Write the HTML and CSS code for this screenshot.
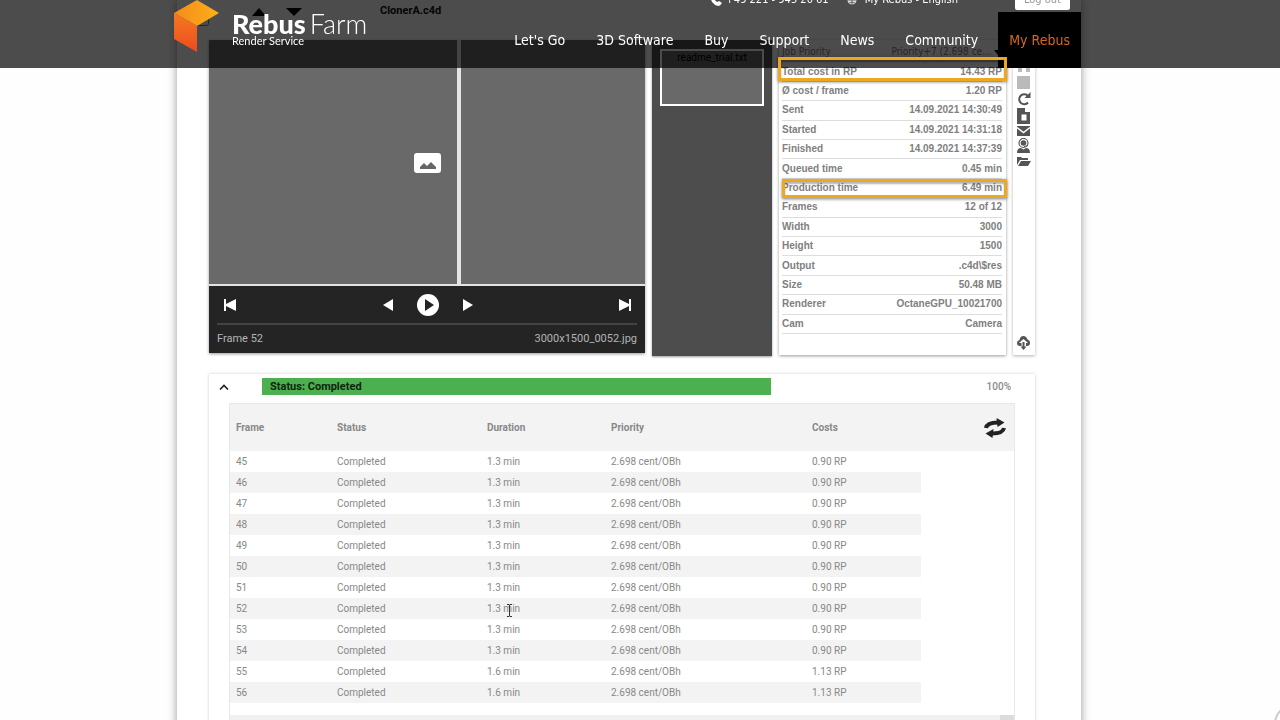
FILE: index.html
```html
<!DOCTYPE html>
<html lang="en">
<head>
<meta charset="utf-8">
<title>RebusFarm – My Rebus</title>
<link rel="stylesheet" href="styles.css">
</head>
<body>
<header class="site-header">
  <div class="header-inner">
    <a class="logo" href="#" aria-label="RebusFarm Render Service">
      <svg class="logo-mark" viewBox="0 0 46 53" width="46" height="53" aria-hidden="true">
        <defs>
          <linearGradient id="lt" x1="0" x2="1"><stop offset="0" stop-color="#f58a1c"/><stop offset="1" stop-color="#fcb017"/></linearGradient>
          <linearGradient id="lf" x1="0" x2="0" y1="0" y2="1"><stop offset="0" stop-color="#f47a20"/><stop offset="1" stop-color="#ee4a20"/></linearGradient>
        </defs>
        <path d="M0 13 23 0 45 13 23 26z" fill="url(#lt)"/>
        <path d="M0 13 23 26V52L0 39z" fill="url(#lf)"/>
      </svg>
      <span class="logo-text">
        <span class="logo-name"><b>Rebus</b><span class="logo-farm">Farm</span></span>
        <span class="logo-sub">Render Service</span>
      </span>
    </a>
    <div class="header-right">
      <div class="utility">
        <span class="util-item"><svg viewBox="0 0 12 12" width="12" height="12" aria-hidden="true"><path d="M1 2 3 0 5 3 4 4.500Q5 7 7.500 8L9 7l3 2-2 2.500Q6 13 2.500 8.500 0 5 1 2z" fill="#fff"/></svg>+49 221 - 945 20 61</span>
        <a class="util-item lang" href="#"><svg viewBox="0 0 12 12" width="10" height="10" aria-hidden="true"><circle cx="6" cy="6" r="5.500" fill="#ddd"/><path d="M0 6h12M6 0v12M2 2q4 3 8 0M2 10q4-3 8 0" stroke="#555" fill="none"/></svg>My Rebus - English</a>
        <button class="logout" type="button">Log out</button>
      </div>
      <nav class="nav">
        <a href="#">Let's Go</a><a href="#">3D Software</a><a href="#">Buy</a><a href="#">Support</a><a href="#">News</a><a href="#">Community</a><a class="active" href="#">My Rebus</a>
      </nav>
    </div>
  </div>
</header>

<main class="page">
  <div class="job-title">
    <input class="pick" type="checkbox" aria-label="Select job">
    <button class="icon-btn" type="button" aria-label="Previous job"><svg viewBox="0 0 14 8" width="14" height="8"><path d="M0 8 7 0l7 8z"/></svg></button>
    <button class="icon-btn" type="button" aria-label="Next job"><svg viewBox="0 0 16 8" width="16" height="8"><path d="M0 0h16L8 8z"/></svg></button>
    <h1>ClonerA.c4d</h1>
  </div>

  <div class="job">
    <section class="preview">
      <div class="stage">
        <div class="stage-left"></div><div class="stage-right"></div>
        <svg class="picture-icon" viewBox="0 0 27 20" width="27" height="20" aria-hidden="true"><rect width="27" height="20" rx="3" fill="#fff"/><path d="M6 16v-2l4-4 3 3 4-4 5 5v2z" fill="#666"/></svg>
      </div>
      <div class="player">
        <div class="controls">
          <button class="icon-btn" type="button" aria-label="First frame"><svg viewBox="0 0 12 12" width="12" height="12"><path d="M0 0h2v5L12 0v12L2 7v5H0z"/></svg></button>
          <div class="control-group">
            <button class="icon-btn" type="button" aria-label="Previous frame"><svg viewBox="0 0 10 12" width="10" height="12"><path d="M10 0v12L0 6z"/></svg></button>
            <button class="icon-btn" type="button" aria-label="Play"><svg viewBox="0 0 22 22" width="22" height="22"><circle cx="11" cy="11" r="11"/><path d="M8 5v12l9-6z" fill="#242424"/></svg></button>
            <button class="icon-btn" type="button" aria-label="Next frame"><svg viewBox="0 0 10 12" width="10" height="12"><path d="M0 0v12l10-6z"/></svg></button>
          </div>
          <button class="icon-btn" type="button" aria-label="Last frame"><svg viewBox="0 0 12 12" width="12" height="12"><path d="M12 0h-2v5L0 0v12l10-5v5h2z"/></svg></button>
        </div>
        <div class="caption"><span>Frame 52</span><span>3000x1500_0052.jpg</span></div>
      </div>
    </section>

    <aside class="thumbs"><div class="thumb">readme_trial.txt</div></aside>

    <section class="details">
      <dl>
        <div><dt class="priority">Job Priority</dt><dd class="priority">Priority+7 (2.698 ce… <svg viewBox="0 0 8 5" width="8" height="5" aria-hidden="true"><path d="M0 0h8L4 5z" fill="#000"/></svg></dd></div>
        <div><dt>Total cost in RP</dt><dd>14.43 RP</dd></div>
        <div><dt>Ø cost / frame</dt><dd>1.20 RP</dd></div>
        <div><dt>Sent</dt><dd>14.09.2021 14:30:49</dd></div>
        <div><dt>Started</dt><dd>14.09.2021 14:31:18</dd></div>
        <div><dt>Finished</dt><dd>14.09.2021 14:37:39</dd></div>
        <div><dt>Queued time</dt><dd>0.45 min</dd></div>
        <div><dt>Production time</dt><dd>6.49 min</dd></div>
        <div><dt>Frames</dt><dd>12 of 12</dd></div>
        <div><dt>Width</dt><dd>3000</dd></div>
        <div><dt>Height</dt><dd>1500</dd></div>
        <div><dt>Output</dt><dd>.c4d\$res</dd></div>
        <div><dt>Size</dt><dd>50.48 MB</dd></div>
        <div><dt>Renderer</dt><dd>OctaneGPU_10021700</dd></div>
        <div><dt>Cam</dt><dd>Camera</dd></div>
      </dl>
      <span class="mark mark-cost"></span>
      <span class="mark mark-time"></span>
    </section>

    <aside class="tools">
      <button class="icon-btn" type="button" aria-label="Pause"><svg viewBox="0 0 14 14" width="14" height="14"><path d="M1 1h4v11H1zM9 1h4v11H9z" fill="#bbb"/></svg></button>
      <button class="icon-btn" type="button" aria-label="Stop"><svg viewBox="0 0 14 14" width="14" height="14"><path d="M0 0h13v13H0z" fill="#bababa"/></svg></button>
      <button class="icon-btn" type="button" aria-label="Restart"><svg viewBox="0 0 14 14" width="14" height="14"><path d="M10.500 3.500A5 5 0 1 0 11 10.500" fill="none" stroke="#555" stroke-width="2"/><path d="M13.500 0v6H7.500z"/></svg></button>
      <button class="icon-btn" type="button" aria-label="Copy"><svg viewBox="0 0 14 16" width="14" height="16"><path d="M0 0h8v4h5v12H0z"/><path d="M4.500 6.500h5v6h-5z" fill="#fff"/></svg></button>
      <button class="icon-btn" type="button" aria-label="Mail"><svg viewBox="0 0 14 10" width="14" height="10"><path d="M0 0h13v10H0z"/><path d="M0 1.500 6.500 6.500 13 1.500" stroke="#fff" stroke-width="1.500" fill="none"/></svg></button>
      <button class="icon-btn" type="button" aria-label="Support"><svg viewBox="0 0 14 15" width="14" height="15"><circle cx="6.500" cy="5" r="4.500" fill="none" stroke="#555" stroke-width="1.200"/><circle cx="6.500" cy="5" r="2.800"/><path d="M0 15q0-5 4-5l2.500 1.500L9 10q4 0 4 5zM7 8l4-1v1L7 9z"/></svg></button>
      <button class="icon-btn" type="button" aria-label="Open folder"><svg viewBox="0 0 14 12" width="14" height="12"><path d="M0 10V2h4l1 1h6v2H3zM1 11 4 6h10l-3 5z"/></svg></button>
      <button class="icon-btn download" type="button" aria-label="Download"><svg viewBox="0 0 14 15" width="14" height="15"><path d="M3 11Q0 11 0 8 0 5.500 2.500 5 3 1 6.500 1q3 0 4 3.500Q13 5 13 8q0 3-3 3H9V8h2L6.500 4 2 8h2.500v3z"/><path d="M5.500 7h2v4.500h2l-3 3.500-3-3.500h2z"/></svg></button>
    </aside>
  </div>

  <section class="status">
    <div class="status-head">
      <button class="icon-btn" type="button" aria-label="Collapse"><svg viewBox="0 0 10 6" width="10" height="6"><path d="M1 5.500 5 1.500l4 4" fill="none" stroke="#222" stroke-width="1.600"/></svg></button>
      <div class="bar">Status: Completed</div>
      <span class="percent">100%</span>
    </div>
    <div class="frames">
      <table>
        <colgroup><col class="c-frame"><col class="c-status"><col class="c-duration"><col class="c-priority"><col class="c-costs"><col></colgroup>
        <thead><tr><th>Frame</th><th>Status</th><th>Duration</th><th>Priority</th><th>Costs</th><th class="refresh"><button class="icon-btn" type="button" aria-label="Refresh"><svg viewBox="0 0 22 20" width="22" height="20"><path d="M2 10Q3 4.500 14 4.500M20 10q-1 5.500-12 5.500" fill="none" stroke="#222" stroke-width="4"/><path d="M12.500 0l8 4.500-7 4.500zM9.500 11l-8 4.500 7 4.500z" fill="#222"/></svg></button></th></tr></thead>
        <tbody>
          <tr><td>45</td><td>Completed</td><td>1.3 min</td><td>2.698 cent/OBh</td><td>0.90 RP</td></tr>
          <tr><td>46</td><td>Completed</td><td>1.3 min</td><td>2.698 cent/OBh</td><td>0.90 RP</td></tr>
          <tr><td>47</td><td>Completed</td><td>1.3 min</td><td>2.698 cent/OBh</td><td>0.90 RP</td></tr>
          <tr><td>48</td><td>Completed</td><td>1.3 min</td><td>2.698 cent/OBh</td><td>0.90 RP</td></tr>
          <tr><td>49</td><td>Completed</td><td>1.3 min</td><td>2.698 cent/OBh</td><td>0.90 RP</td></tr>
          <tr><td>50</td><td>Completed</td><td>1.3 min</td><td>2.698 cent/OBh</td><td>0.90 RP</td></tr>
          <tr><td>51</td><td>Completed</td><td>1.3 min</td><td>2.698 cent/OBh</td><td>0.90 RP</td></tr>
          <tr><td>52</td><td>Completed</td><td>1.3 min</td><td>2.698 cent/OBh</td><td>0.90 RP</td></tr>
          <tr><td>53</td><td>Completed</td><td>1.3 min</td><td>2.698 cent/OBh</td><td>0.90 RP</td></tr>
          <tr><td>54</td><td>Completed</td><td>1.3 min</td><td>2.698 cent/OBh</td><td>0.90 RP</td></tr>
          <tr><td>55</td><td>Completed</td><td>1.6 min</td><td>2.698 cent/OBh</td><td>1.13 RP</td></tr>
          <tr><td>56</td><td>Completed</td><td>1.6 min</td><td>2.698 cent/OBh</td><td>1.13 RP</td></tr>
        </tbody>
      </table>
      <div class="scroll-track"><span class="scroll-corner"></span></div>
    </div>
  </section>
</main>

<svg class="cursor" viewBox="0 0 7 13" width="7" height="13" aria-hidden="true"><path d="M1 .5h2l.5.5.5-.5h2M1 12.500h2l.5-.5.5.5h2M3.500 1v11" fill="none" stroke="#333"/></svg>
<button class="to-top" type="button" aria-label="Back to top"></button>
</body>
</html>
```

FILE: styles.css
```css
* { box-sizing: border-box; }

body {
  margin: 0;
  height: 100vh;
  overflow: hidden;
  padding-right: 22px;
  background: #fefefe;
  font-family: Roboto, sans-serif;
  font-size: 10px;
  color: #888;
}

a { color: inherit; text-decoration: none; }

.icon-btn {
  display: flex;
  padding: 0;
  border: 0;
  background: none;
  cursor: pointer;
}

/* Header */
.site-header {
  position: fixed;
  inset: 0 0 auto;
  z-index: 10;
  height: 68px;
  padding-right: 22px;
  overflow: hidden;
  background: rgba(0, 0, 0, 0.7);
  color: #fff;
}

.header-inner {
  display: flex;
  justify-content: space-between;
  max-width: 904px;
  margin: 0 auto;
}

.logo { display: flex; gap: 12px; margin-left: -3px; }

.logo-text { display: flex; flex-direction: column; padding-top: 8px; }

.logo-name {
  display: flex;
  gap: 4px;
  font: 900 27px/31px Lato, sans-serif;
}

.logo-farm { font-weight: 300; }

.logo-sub { font: 11px/12px Lato, sans-serif; margin-top: -4px; }

.header-right { display: flex; flex-direction: column; align-items: flex-end; }

.utility {
  display: flex;
  align-items: center;
  height: 20px;
  margin: -10px 11px 2px 0;
  font: 11px/16px "DejaVu Sans Condensed", "DejaVu Sans", sans-serif;
}

.util-item { display: flex; align-items: center; gap: 4px; }

.lang { margin: 0 57px 0 18px; gap: 8px; }

.logout {
  width: 55px;
  height: 20px;
  padding: 0;
  border: 0;
  border-radius: 2px;
  background: #fff;
  font: inherit;
  color: #999;
}

.nav {
  display: flex;
  font: 14px/56px "DejaVu Sans Condensed", "DejaVu Sans", sans-serif;
}

.nav a { margin-right: 31px; }

.nav a:nth-last-child(2) { margin-right: 20px; }

.nav .active {
  margin: 0;
  padding: 0 11px;
  background: #000;
  color: #d9661e;
}

/* Page */
.page {
  max-width: 904px;
  min-height: 100vh;
  margin: 0 auto;
  padding: 0 46px 0 32px;
  background: #fff;
  box-shadow: 0 0 9px rgba(0, 0, 0, 0.4);
}

.job-title {
  display: flex;
  height: 40px;
  padding-top: 8px;
}

.job-title h1 {
  margin: -4px 0 0 78px;
  font-size: 11px;
  line-height: 13px;
  color: #111;
}

.job-title .icon-btn { height: 8px; }
.job-title .icon-btn + .icon-btn { margin-left: 20px; }

.pick { width: 13px; height: 13px; margin: 5px 43px 0 -13px; }

.job { display: flex; gap: 7px; }

.preview { flex: 1; height: 313px; box-shadow: 0 1px 3px rgba(0, 0, 0, 0.4); }

.stage {
  position: relative;
  display: flex;
  gap: 4px;
  height: 246px;
  border-bottom: 2px solid #e4e4e4;
  background: #e4e4e4;
}

.stage-left { flex: 248; background: #696969; }
.stage-right { flex: 184; background: #696969; }

.picture-icon { position: absolute; left: 47%; top: 113px; }

.player {
  height: 67px;
  padding: 0 8px;
  background: #242424;
}

.controls {
  display: flex;
  align-items: center;
  justify-content: space-between;
  height: 39px;
  padding: 0 6px 0 7px;
  border-bottom: 2px solid #444;
  fill: #fff;
}

.control-group { display: flex; align-items: center; gap: 24px; }

.caption {
  display: flex;
  justify-content: space-between;
  font-size: 11px;
  line-height: 28px;
  color: #b4b4b4;
}

.thumbs {
  flex: 0 0 120px;
  height: 316px;
  padding: 9px 8px;
  background: #4d4d4d;
  box-shadow: 0 1px 2px rgba(0, 0, 0, 0.4);
}

.thumb {
  height: 57px;
  border: 2px solid #fff;
  background: #696969;
  text-align: center;
  line-height: 14px;
  color: #000;
}

.details {
  position: relative;
  flex: 0 0 227px;
  height: 315px;
  padding: 3px 4px 0 3px;
  box-shadow: 0 1px 3px rgba(0, 0, 0, 0.4);
  font: bold 10px/12px "Liberation Sans", sans-serif;
  color: #808080;
}

.details dl {
  display: grid;
  grid-auto-rows: 1fr;
  height: 291px;
  margin: 0;
}

.details dl > div {
  display: flex;
  align-items: center;
  justify-content: space-between;
  border-bottom: 1px solid #ddd;
}

.details dd { margin: 0; }

.details .priority { font: 10px/12px "DejaVu Sans Condensed", "DejaVu Sans", sans-serif; }

.mark {
  position: absolute;
  z-index: 20;
  right: -1px;
  border: 3px solid #eea820;
  box-shadow: 0 1px 3px rgba(0, 0, 0, 0.5), inset 0 2px 2px rgba(0, 0, 0, 0.3);
}

.mark-cost { top: 17px; left: -1px; height: 24px; }
.mark-time { top: 139px; left: 3px; height: 19px; }

.tools {
  display: flex;
  flex-direction: column;
  gap: 2px;
  flex: 0 0 22px;
  height: 315px;
  padding: 20px 0 5px 4px;
  box-shadow: 0 1px 3px rgba(0, 0, 0, 0.3);
  fill: #555;
}

.download { margin-top: auto; }

/* Status panel */
.status {
  min-height: calc(100vh - 374px);
  margin-top: 18px;
  padding: 4px 20px 0;
  box-shadow: 0 0 3px rgba(0, 0, 0, 0.2);
}

.status-head {
  display: flex;
  align-items: center;
  height: 17px;
  padding-right: 4px;
}

.status-head .icon-btn { margin: 0 33px 0 -10px; }

.bar {
  flex: 0 1 509px;
  padding-left: 8px;
  background: #4caf50;
  font-size: 11px;
  font-weight: bold;
  line-height: 17px;
  color: #10240f;
}

.percent { margin-left: auto; font-weight: 500; }

.frames {
  margin-top: 8px;
  border: 1px solid #e8e8e8;
  border-bottom: 0;
}

table {
  width: 100%;
  table-layout: fixed;
  border-collapse: collapse;
}

.c-frame { width: 101px; }
.c-status { width: 150px; }
.c-duration { width: 124px; }
.c-priority { width: 201px; }
.c-costs { width: 115px; }

th, td { padding: 0 0 0 6px; text-align: left; }

th { height: 47px; background: #f3f3f3; }

td { height: 21px; }

tbody tr:nth-child(even) td { background: #f3f3f3; }

.refresh .icon-btn { margin: 0 8px 0 auto; }

.scroll-track {
  display: flex;
  justify-content: flex-end;
  height: 14px;
  margin-top: 12px;
  background: #f1f1f1;
}

.scroll-corner { width: 14px; background: #dcdcdc; }

.cursor { position: fixed; left: 506px; top: 604px; }

.to-top {
  position: fixed;
  right: -34px;
  bottom: -24px;
  width: 40px;
  height: 40px;
  border: 2px solid #ccc;
  border-radius: 50%;
  background: #fff;
}
```
